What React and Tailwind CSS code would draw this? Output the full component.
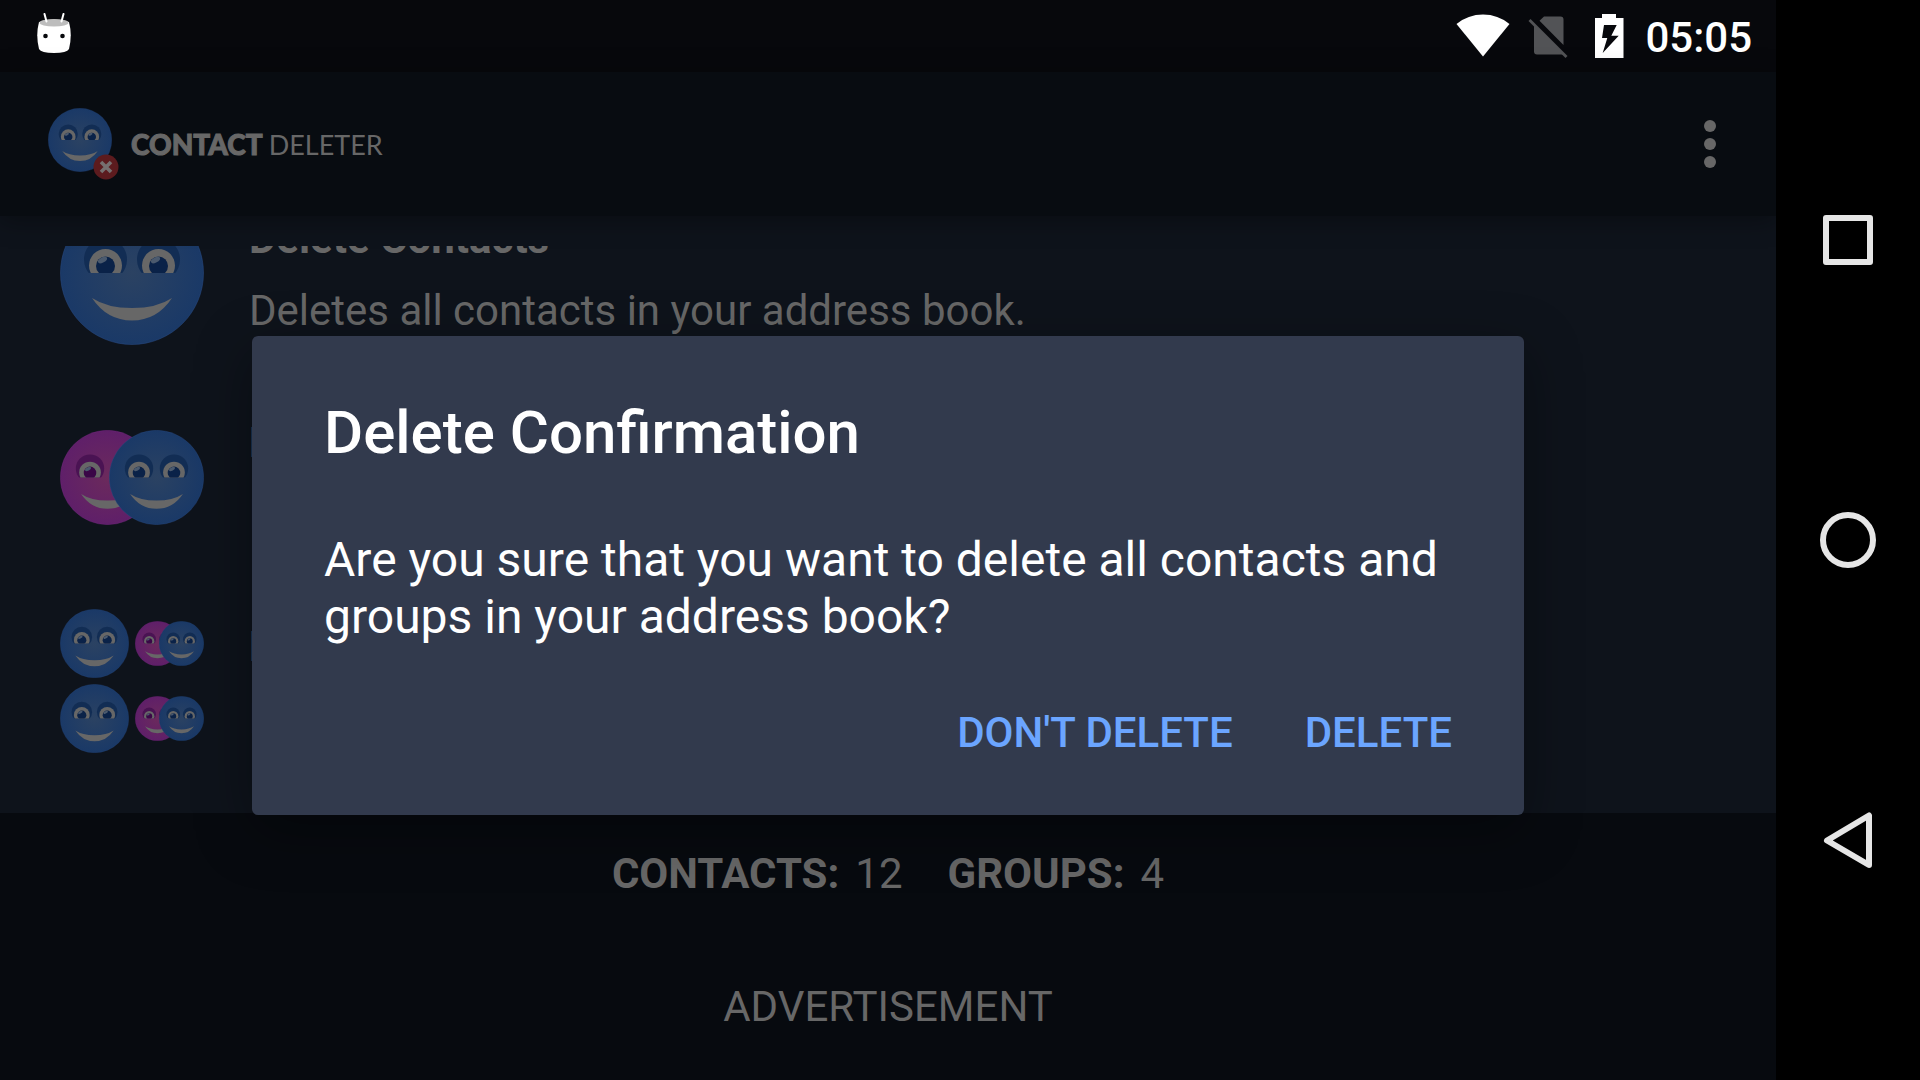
import { useId } from "react";

const FACE_COLORS = {
  blue: { mid: "#2b4262", edge: "#1a3967", socket: "#122d54", iris: "#0a2248", line: "#2a4c86" },
  pink: { mid: "#6b2a5c", edge: "#5f1f69", socket: "#4a1353", iris: "#3a0647", line: "#7c2a86" }
};

function Face({ color = "blue", className }) {
  const id = useId();
  const c = FACE_COLORS[color];

  return (
    <svg viewBox="0 0 144 144" className={className} aria-hidden="true">
      <defs>
        <radialGradient id={`${id}-skin`}>
          <stop offset="0" stopColor={c.mid} />
          <stop offset="1" stopColor={c.edge} />
        </radialGradient>
        <clipPath id={`${id}-lid`}>
          <rect width="144" height="72" />
        </clipPath>
      </defs>
      <circle cx="72" cy="72" r="71.5" fill={`url(#${id}-skin)`} stroke={c.line} strokeWidth="0.5" />
      {[45.5, 98.5].map((x) => (
        <g key={x} clipPath={`url(#${id}-lid)`}>
          <circle cx={x} cy="58.5" r="21.5" fill={c.socket} />
          <circle cx={x} cy="64.5" r="16.5" fill="#676767" />
          <circle cx={x} cy="65" r="9.5" fill={c.iris} />
          <ellipse cx={x - 3} cy="59" rx="5" ry="2.5" fill="#4b5a6e" transform={`rotate(-28 ${x - 3} 59)`} />
        </g>
      ))}
      <path d="M32 97 Q47 107 72 107 Q97 107 112 97 Q97 119.500 72 119.500 Q47 119.500 32 97 Z" fill="#676767" />
    </svg>
  );
}

function FacePair({ faceClass, overlapClass }) {
  return (
    <div className="flex">
      <Face color="pink" className={faceClass} />
      <Face className={`${faceClass} ${overlapClass}`} />
    </div>
  );
}

function StatusBar() {
  return (
    <div className="flex h-[72px] shrink-0 items-center justify-between bg-[#07080c] pr-6 pl-9">
      <svg viewBox="0 0 36 46" className="h-[46px] w-9" aria-hidden="true">
        <path d="M3 9 Q18 4 33 9 Q36.500 22 33 36 Q31 40 18 40 Q5 40 3 36 Q-0.500 22 3 9 Z" fill="#fff" />
        <ellipse cx="18" cy="9.800" rx="14.500" ry="3.800" fill="#bdbdbd" />
        <path d="M8.500 1 L10.500 8.500 M27.500 1 L25.500 8.500" stroke="#fff" strokeWidth="2" strokeLinecap="round" />
        <circle cx="9.500" cy="23" r="2.300" fill="#07080c" />
        <circle cx="26.500" cy="23" r="2.300" fill="#07080c" />
      </svg>
      <div className="flex items-center">
        <svg viewBox="0 0 54 44" className="h-11 w-[54px]" aria-hidden="true">
          <path d="M0.500 10 Q12 0.500 27 0.500 Q42 0.500 53.500 10 L27 42.500 Z" fill="#fff" />
        </svg>
        <svg viewBox="0 0 40 44" className="ml-[18px] h-11 w-10" aria-hidden="true">
          <path d="M11.500 6.700 L16 2.500 H32.500 Q35.500 2.500 35.500 5.500 V31 Z M6 10.500 L36 40.500 H9 Q6 40.500 6 37.500 Z" fill="#525356" />
          <path d="M1.500 6 L38.500 43" stroke="#525356" strokeWidth="2.800" />
        </svg>
        <svg viewBox="0 0 30 44" className="ml-[26px] h-11 w-[30px]" aria-hidden="true">
          <path d="M8 0 H22 V4 H29.500 V44 H1 V4 H8 Z M10 11 H22.700 L17.300 21.700 H24.700 L8.700 39 L13.300 24 H8 Z" fill="#fff" fillRule="evenodd" />
        </svg>
        <span className="ml-[21px] pt-1 text-[42px] leading-[48px] font-medium text-white">05:05</span>
      </div>
    </div>
  );
}

function AppBar() {
  return (
    <header className="z-10 flex h-36 shrink-0 items-center justify-between bg-[#080c11] px-12 shadow-[0_4px_24px_rgba(0,0,0,0.35)]">
      <div className="flex items-center text-[#676767]">
        <div className="relative h-[72px] w-[71px]">
          <Face className="h-16 w-16" />
          <svg viewBox="0 0 26 26" className="absolute right-0 bottom-0 h-[26px] w-[26px]" aria-hidden="true">
            <circle cx="13" cy="13" r="12.500" fill="#5c1b1e" />
            <path d="M8 8 L18 18 M18 8 L8 18" stroke="#767070" strokeWidth="3.600" />
          </svg>
        </div>
        <h1 className="ml-3 flex items-baseline gap-1.5 font-[Lato,sans-serif] leading-8">
          <b className="text-[28px] font-black [-webkit-text-stroke:1px_#676767]">CONTACT</b>
          <span className="text-[27px]">DELETER</span>
        </h1>
      </div>
      <button aria-label="More options" className="flex w-9 flex-col items-center gap-1.5">
        <span className="h-3 w-3 rounded-full bg-[#676767]" />
        <span className="h-3 w-3 rounded-full bg-[#676767]" />
        <span className="h-3 w-3 rounded-full bg-[#676767]" />
      </button>
    </header>
  );
}

function ActionItem({ icon, title, description }) {
  return (
    <li className="flex h-[204px] shrink-0 items-center px-[60px]">
      <div className="w-36 shrink-0">{icon}</div>
      <div className="ml-[45px] pt-1 text-[42px] leading-[48px] text-[#676767]">
        <h2 className="font-bold">{title}</h2>
        <p className="mt-6">{description}</p>
      </div>
    </li>
  );
}

function ActionList() {
  const bothRow = (
    <div className="flex items-center justify-between">
      <Face className="h-[69px] w-[69px]" />
      <FacePair faceClass="h-[45px] w-[45px]" overlapClass="-ml-[21px]" />
    </div>
  );

  return (
    <ul className="mt-[30px] flex min-h-0 flex-1 flex-col justify-end overflow-hidden pb-[30px]">
      <ActionItem
        icon={<Face className="h-36 w-36" />}
        title="Delete Contacts"
        description="Deletes all contacts in your address book."
      />
      <ActionItem
        icon={<FacePair faceClass="h-[95px] w-[95px]" overlapClass="-ml-[46px]" />}
        title="Delete Groups"
        description="Deletes all groups in your address book."
      />
      <ActionItem
        icon={
          <div className="flex flex-col gap-1.5">
            {bothRow}
            {bothRow}
          </div>
        }
        title="Delete Contacts & Groups"
        description="Deletes all contacts and groups."
      />
    </ul>
  );
}

function Footer() {
  return (
    <footer className="flex h-[267px] shrink-0 flex-col items-center bg-[#070a0f] pt-[37px] text-[42px] leading-[48px] text-[#676767]">
      <div className="flex gap-[45px]">
        <p>
          <b className="mr-4">CONTACTS:</b>12
        </p>
        <p>
          <b className="mr-4">GROUPS:</b>4
        </p>
      </div>
      <p className="mt-[85px]">ADVERTISEMENT</p>
    </footer>
  );
}

function DeleteDialog() {
  return (
    <div className="absolute inset-0 z-20 flex items-center justify-center pt-[71px]">
      <div
        role="alertdialog"
        aria-labelledby="dialog-title"
        aria-describedby="dialog-message"
        className="mx-[252px] flex-1 rounded-md bg-[#323a4d] px-[72px] pt-[61px] pb-[54px] text-white shadow-[0_16px_56px_rgba(0,0,0,0.35)]"
      >
        <h2 id="dialog-title" className="text-[60px] leading-[72px] font-medium">
          Delete Confirmation
        </h2>
        <p id="dialog-message" className="mt-[62px] text-5xl leading-[57px]">
          Are you sure that you want to delete all contacts and groups in your address book?
        </p>
        <div className="mt-[59px] flex justify-end gap-[72px] text-[42px] leading-[57px] font-medium text-[#6ba5ff]">
          <button>DON'T DELETE</button>
          <button>DELETE</button>
        </div>
      </div>
    </div>
  );
}

function NavBar() {
  return (
    <nav className="flex w-36 shrink-0 flex-col items-center justify-center gap-[228px] bg-black">
      <button aria-label="Recent apps">
        <svg viewBox="0 0 72 72" className="h-[72px] w-[72px]" fill="none" stroke="#e6e6e6" strokeWidth="6" strokeLinejoin="round">
          <rect x="14" y="14" width="44" height="44" />
        </svg>
      </button>
      <button aria-label="Home">
        <svg viewBox="0 0 72 72" className="h-[72px] w-[72px]" fill="none" stroke="#e6e6e6" strokeWidth="6">
          <circle cx="36" cy="36" r="25" />
        </svg>
      </button>
      <button aria-label="Back">
        <svg viewBox="0 0 72 72" className="h-[72px] w-[72px]" fill="none" stroke="#e6e6e6" strokeWidth="6" strokeLinejoin="round">
          <path d="M15 36.500 L57 11.500 V61 Z" />
        </svg>
      </button>
    </nav>
  );
}

export default function App() {
  return (
    <div className="flex h-screen bg-black font-[Roboto,sans-serif]">
      <div className="relative flex min-w-0 flex-1 flex-col bg-[#0e131b]">
        <StatusBar />
        <AppBar />
        <ActionList />
        <Footer />
        <DeleteDialog />
      </div>
      <NavBar />
    </div>
  );
}
